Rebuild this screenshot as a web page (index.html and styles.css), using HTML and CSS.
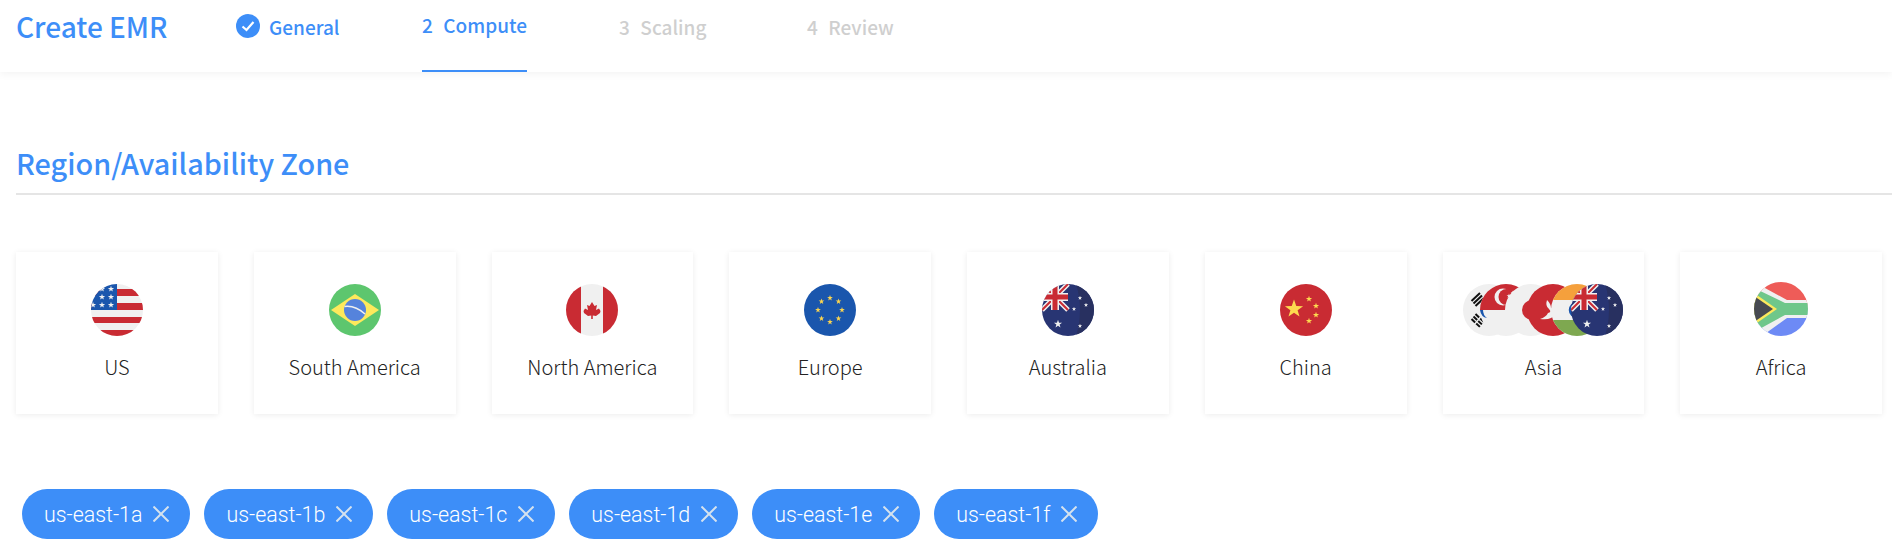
FILE: index.html
```html
<!DOCTYPE html>
<html>
	<head>
		<meta charset="utf-8">
		<title>Create EMR</title>
		<link rel="stylesheet" href="styles.css">
	</head>
	<body>
		<svg class="defs" width="0" height="0">
			<defs>
				<clipPath id="disc"><circle cx="26" cy="26" r="26"/></clipPath>
				<polygon id="star" points="0,-5 1.2,-1.6 4.8,-1.5 1.9,0.6 2.9,4 0,2 -2.9,4 -1.9,0.6 -4.8,-1.5 -1.2,-1.6"/>
				<g id="flag-us">
					<g clip-path="url(#disc)">
						<rect width="52" height="52" fill="#f0f0f0"/>
						<rect y="5" width="52" height="7" fill="#c92b33"/>
						<rect y="19" width="52" height="7" fill="#c92b33"/>
						<rect y="33" width="52" height="6" fill="#c92b33"/>
						<rect y="46" width="52" height="6" fill="#c92b33"/>
						<rect width="26" height="26" fill="#1a56ad"/>
						<g fill="#f0f0f0">
							<use href="#star" transform="translate(20 5) scale(.65)"/>
							<use href="#star" transform="translate(11 5) scale(.65)"/>
							<use href="#star" transform="translate(20 13) scale(.65)"/>
							<use href="#star" transform="translate(11 13) scale(.65)"/>
							<use href="#star" transform="translate(20 21) scale(.65)"/>
							<use href="#star" transform="translate(11 21) scale(.65)"/>
							<use href="#star" transform="translate(2 21) scale(.65)"/>
						</g>
					</g>
				</g>
				<g id="flag-au">
					<g clip-path="url(#disc)">
						<rect width="52" height="52" fill="#283573"/>
						<path d="M34 0Q42 26 34 52H52V0Z" fill="#283060"/>
						<path d="M0 0 26 26M26 0 0 26" stroke="#f0f0f0" stroke-width="5"/>
						<path d="M0 0 26 26M26 0 0 26" stroke="#c92b33" stroke-width="2"/>
						<path d="M13 0V26M0 13H26" stroke="#f0f0f0" stroke-width="8"/>
						<path d="M13 0V26M0 13H26" stroke="#c92b33" stroke-width="5"/>
						<g fill="#f0f0f0">
							<use href="#star" transform="translate(16 40) scale(.85)"/>
							<use href="#star" transform="translate(38 14) scale(.45)"/>
							<use href="#star" transform="translate(44 21) scale(.45)"/>
							<use href="#star" transform="translate(32 25) scale(.45)"/>
							<use href="#star" transform="translate(38 42) scale(.45)"/>
						</g>
					</g>
				</g>
				<path id="x-mark" d="M.5 .5 15.500 15.500M15.500 .5 .5 15.500"/>
			</defs>
		</svg>

		<header class="topbar">
			<h1 class="title">Create EMR</h1>
			<nav class="steps">
				<a class="step step-done">
					<svg class="step-check" width="24" height="24" viewBox="0 0 24 24">
						<circle cx="12" cy="12" r="12" fill="#3d8ef8"/>
						<path d="M6.500 12.500 10.500 16 17.500 8" fill="none" stroke="#fff" stroke-width="2.200"/>
					</svg>
					General
				</a>
				<a class="step step-active"><span class="step-num">2</span>Compute</a>
				<a class="step step-todo"><span class="step-num">3</span>Scaling</a>
				<a class="step step-todo"><span class="step-num">4</span>Review</a>
			</nav>
		</header>

		<main class="content">
			<h2 class="section-title">Region/Availability Zone</h2>

			<div class="regions">
				<div class="region">
					<svg class="flag" width="52" height="52" viewBox="0 0 52 52"><use href="#flag-us"/></svg>
					<span>US</span>
				</div>
				<div class="region">
					<svg class="flag" width="52" height="52" viewBox="0 0 52 52">
						<circle cx="26" cy="26" r="26" fill="#5dc66e"/>
						<polygon points="26,10 50,26 26,42 2,26" fill="#fde95c"/>
						<circle cx="26" cy="26" r="11" fill="#5583dc"/>
						<path d="M15.500 22.500Q26 21 36 30" fill="none" stroke="#f0f0f0" stroke-width="1.600"/>
					</svg>
					<span>South America</span>
				</div>
				<div class="region">
					<svg class="flag" width="52" height="52" viewBox="0 0 52 52">
						<g clip-path="url(#disc)">
							<rect width="52" height="52" fill="#f0f0f0"/>
							<rect width="15" height="52" fill="#c92b33"/>
							<rect x="37" width="15" height="52" fill="#c92b33"/>
							<path d="M26 18 28.500 22 31 21 30 26 33 24.500 34.500 27 34 29 30 32 26.800 31.500V35H25.200V31.500L22 32 18 29 17.500 27 19 24.500 22 26 21 21 23.500 22Z" fill="#c92b33"/>
						</g>
					</svg>
					<span>North America</span>
				</div>
				<div class="region">
					<svg class="flag" width="52" height="52" viewBox="0 0 52 52">
						<circle cx="26" cy="26" r="26" fill="#1a56ad"/>
						<g fill="#fbd44f">
							<use href="#star" transform="translate(26 14) scale(.6)"/>
							<use href="#star" transform="translate(34.500 17.500) scale(.6)"/>
							<use href="#star" transform="translate(38 26) scale(.6)"/>
							<use href="#star" transform="translate(34.500 34.500) scale(.6)"/>
							<use href="#star" transform="translate(26 38) scale(.6)"/>
							<use href="#star" transform="translate(17.500 34.500) scale(.6)"/>
							<use href="#star" transform="translate(14 26) scale(.6)"/>
							<use href="#star" transform="translate(17.500 17.500) scale(.6)"/>
						</g>
					</svg>
					<span>Europe</span>
				</div>
				<div class="region">
					<svg class="flag" width="52" height="52" viewBox="0 0 52 52"><use href="#flag-au"/></svg>
					<span>Australia</span>
				</div>
				<div class="region">
					<svg class="flag" width="52" height="52" viewBox="0 0 52 52">
						<circle cx="26" cy="26" r="26" fill="#c92b33"/>
						<g fill="#fdd94f">
							<use href="#star" transform="translate(14 25) scale(1.9)"/>
							<use href="#star" transform="translate(29 15) scale(.65)"/>
							<use href="#star" transform="translate(36 22) scale(.65)"/>
							<use href="#star" transform="translate(36 31) scale(.65)"/>
							<use href="#star" transform="translate(29 37) scale(.65)"/>
						</g>
					</svg>
					<span>China</span>
				</div>
				<div class="region">
					<div class="flag-stack">
						<svg class="flag" width="52" height="52" viewBox="0 0 52 52">
							<circle cx="26" cy="26" r="26" fill="#f0f0f0"/>
							<path d="M8.500 17 17 9M10.500 19.500 19 11.500M12.500 22 21 14" stroke="#111" stroke-width="2"/>
							<path d="M8.500 35 17 43M10.500 32.500 19 40.500M12.500 30 21 38" stroke="#111" stroke-width="2" stroke-dasharray="5 1.500"/>
						</svg>
						<svg class="flag" width="52" height="52" viewBox="0 0 52 52">
							<g clip-path="url(#disc)">
								<rect width="52" height="52" fill="#f0f0f0"/>
								<rect width="52" height="26" fill="#c92b33"/>
								<circle cx="23" cy="13" r="8.500" fill="#f0f0f0"/>
								<circle cx="26.500" cy="13" r="8" fill="#c92b33"/>
								<use href="#star" fill="#f0f0f0" transform="translate(29 12) scale(.5)"/>
								<use href="#star" fill="#f0f0f0" transform="translate(33 9) scale(.5)"/>
							</g>
							<path d="M0 26H3Q3 31 7 34Q1 33 0 26Z" fill="#1a56ad"/>
						</svg>
						<svg class="flag" width="52" height="52" viewBox="0 0 52 52">
							<circle cx="26" cy="26" r="26" fill="#f0f0f0"/>
						</svg>
						<svg class="flag" width="52" height="52" viewBox="0 0 52 52">
							<circle cx="5" cy="26" r="10" fill="#c92b33"/>
							<circle cx="26" cy="26" r="26" fill="#c92b33"/>
							<path d="M20 16Q24 20 24 24Q29 25 32 21L35 19Q34 27 31 30L33 33Q27 31 24 34Q20 36 13 35Q19 33 21 29Q25 28 22 25Q18 22 20 16Z" fill="#f0f0f0"/>
						</svg>
						<svg class="flag" width="52" height="52" viewBox="0 0 52 52">
							<g clip-path="url(#disc)">
								<rect width="52" height="52" fill="#f0f0f0"/>
								<rect width="52" height="16" fill="#f5a03c"/>
								<rect y="36" width="52" height="16" fill="#7ea850"/>
								<circle cx="26" cy="26" r="7" fill="none" stroke="#1a56ad" stroke-width="2.500"/>
							</g>
						</svg>
						<svg class="flag" width="52" height="52" viewBox="0 0 52 52"><use href="#flag-au"/></svg>
					</div>
					<span>Asia</span>
				</div>
				<div class="region">
					<svg class="flag flag-za" width="54" height="54" viewBox="0 0 54 54">
						<defs><clipPath id="disc-za"><circle cx="27" cy="27" r="27"/></clipPath></defs>
						<g clip-path="url(#disc-za)">
							<rect width="54" height="27" fill="#ee5c58"/>
							<rect y="27" width="54" height="27" fill="#6d8af5"/>
							<path d="M0 0 33 18H54V36H33L8 54H0Z" fill="#f0f0f0"/>
							<path d="M0 6 31 21H54V33H31L0 50Z" fill="#6fc78a"/>
							<path d="M0 11 23 27 0 43Z" fill="#fde95c"/>
							<path d="M0 14 19 27 0 40Z" fill="#474a52"/>
						</g>
					</svg>
					<span>Africa</span>
				</div>
			</div>

			<div class="chips">
				<span class="chip">us-east-1a<svg class="chip-x" width="16" height="16" viewBox="0 0 16 16"><use href="#x-mark"/></svg></span>
				<span class="chip">us-east-1b<svg class="chip-x" width="16" height="16" viewBox="0 0 16 16"><use href="#x-mark"/></svg></span>
				<span class="chip">us-east-1c<svg class="chip-x" width="16" height="16" viewBox="0 0 16 16"><use href="#x-mark"/></svg></span>
				<span class="chip">us-east-1d<svg class="chip-x" width="16" height="16" viewBox="0 0 16 16"><use href="#x-mark"/></svg></span>
				<span class="chip">us-east-1e<svg class="chip-x" width="16" height="16" viewBox="0 0 16 16"><use href="#x-mark"/></svg></span>
				<span class="chip">us-east-1f<svg class="chip-x" width="16" height="16" viewBox="0 0 16 16"><use href="#x-mark"/></svg></span>
			</div>
		</main>
	</body>
</html>
```

FILE: styles.css
```css
* {
	box-sizing: border-box;
}

html, body {
	margin: 0;
	background: #fff;
}

body {
	font-family: "Noto Sans CJK SC", "Noto Sans", sans-serif;
	color: #222;
	overflow: hidden;
}

.defs {
	display: block;
	height: 0;
}

.topbar {
	display: flex;
	height: 72px;
	padding-left: 16px;
	box-shadow: 0 2px 8px rgba(0, 0, 0, .05);
}

.title {
	margin: 0;
	width: 220px;
	padding-top: 6px;
	font-weight: 500;
	font-size: 28px;
	line-height: 40px;
	color: #3d8ef8;
}

.steps {
	display: grid;
	grid-template-columns: 186px 197px 188px auto;
	justify-items: start;
}

.step {
	display: flex;
	align-items: flex-start;
	padding-top: 11px;
	font-weight: 500;
	font-size: 19px;
	line-height: 28px;
	border-bottom: 2px solid transparent;
}

.step-done {
	color: #3d8ef8;
	padding-top: 13px;
}

.step-check {
	margin: 1px 9px 0 0;
}

.step-num {
	margin-right: 10.5px;
}

.step-active {
	color: #3d8ef8;
	border-bottom-color: #3d8ef8;
}

.step-todo {
	color: #cfcfcf;
	padding-top: 13px;
}

.content {
	padding: 0 0 0 16px;
}

.section-title {
	margin: 76px 0 0;
	height: 47px;
	font-weight: 500;
	font-size: 28.8px;
	line-height: 30px;
	color: #3d8ef8;
	border-bottom: 2px solid #e5e5e5;
}

.regions {
	display: grid;
	grid-template-columns: repeat(8, 1fr);
	gap: 36px;
	margin: 57px 10px 0 0;
}

.region {
	display: flex;
	flex-direction: column;
	align-items: center;
	height: 162px;
	padding-top: 32px;
	font-weight: 300;
	font-size: 20px;
	line-height: 30px;
	box-shadow: 0 1px 6px rgba(0, 0, 0, .08);
}

.region .flag {
	display: block;
	flex: none;
}

.region > .flag {
	margin-bottom: 16px;
}

.region > .flag-za {
	margin-top: -2px;
}

.flag-stack {
	display: flex;
	margin-bottom: 16px;
}

.flag-stack .flag {
	overflow: visible;
}

.flag-stack .flag:nth-child(2) {
	margin-left: -35px;
}

.flag-stack .flag:nth-child(3) {
	margin-left: -27px;
}

.flag-stack .flag:nth-child(4) {
	margin-left: -30px;
}

.flag-stack .flag:nth-child(5) {
	margin-left: -28px;
}

.flag-stack .flag:nth-child(6) {
	margin-left: -32px;
}

.chips {
	display: flex;
	gap: 14px;
	margin: 75px 0 0 6px;
}

.chip {
	display: flex;
	align-items: center;
	gap: 11px;
	height: 50px;
	padding: 0 21px 0 22px;
	border-radius: 25px;
	background: #3d8ef8;
	color: #fff;
	font-family: Roboto, sans-serif;
	font-weight: 300;
	font-size: 21.4px;
}

.chip-x {
	fill: none;
	stroke: #d5e2ee;
	stroke-width: 2;
}
```
